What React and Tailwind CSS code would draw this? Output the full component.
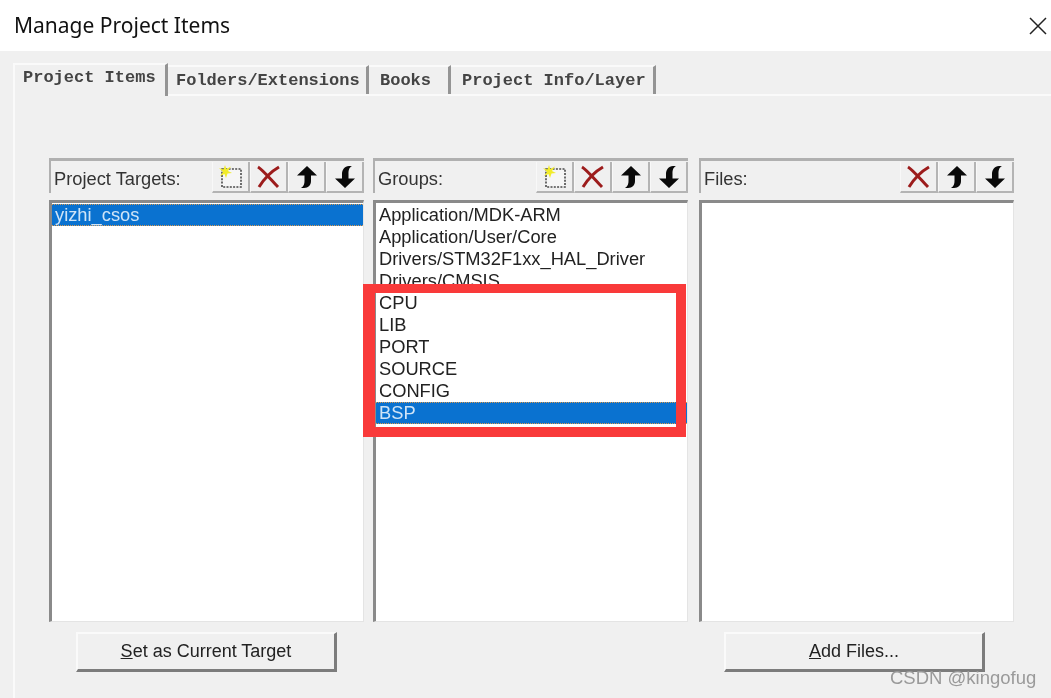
import React from "react";

function NewIcon() {
  return (
    <svg width="28" height="26" viewBox="0 0 28 26">
      <rect x="5" y="5" width="19" height="18" fill="#f6f6f6" stroke="#4a4a4a" strokeWidth="1.600" strokeDasharray="2 1.300" />
      <path d="M8 1 9.300 5 14 2.500 11 7 15 9 10.500 9.500 9 14 7.500 10 3 12 6 8 2 4 6.500 5.500Z" fill="#f2ec2a" />
    </svg>
  );
}

function DeleteIcon() {
  return (
    <svg width="26" height="26" viewBox="0 0 26 26">
      <path d="M2 3c5 3 14 14 20 20M23 3C16 7 8 15 3 23" stroke="#9c1c1c" strokeWidth="3" fill="none" />
    </svg>
  );
}

function UpIcon() {
  return (
    <svg width="26" height="26" viewBox="0 0 26 26">
      <path d="M13 2 23 11.500H17V17C17 21 14.500 24 10 24H7C10 22 10.500 19.500 10.500 17V11.500H3Z" fill="#0a0a0a" />
    </svg>
  );
}

function DownIcon() {
  return (
    <svg width="26" height="26" viewBox="0 0 26 26">
      <path d="M13 24 3 14.500H10V10C10 6 12.500 2 17 2H20C16.500 4 16.500 7 16.500 10V14.500H23Z" fill="#0a0a0a" />
    </svg>
  );
}

function ToolButton({ children }) {
  return (
    <div className="w-[38px] h-[31px] flex items-center justify-center border-r-2 border-b-2 border-[#b4b4b4] border-l border-l-[#f8f8f8] bg-[#f0f0f0]">
      {children}
    </div>
  );
}

function Column({ title, showNew, rows, className }) {
  return (
    <div className={className}>
      <div className="h-[35px] flex justify-between border-t-[3px] border-l-2 border-[#b0b0b0] bg-[#f0f0f0]">
        <span className="pl-[3px] pt-[6px] text-[18.3px] leading-[24px] text-[#333]">{title}</span>
        <div className="flex pt-[1px]">
          {showNew && (
            <ToolButton>
              <NewIcon />
            </ToolButton>
          )}
          <ToolButton>
            <DeleteIcon />
          </ToolButton>
          <ToolButton>
            <UpIcon />
          </ToolButton>
          <ToolButton>
            <DownIcon />
          </ToolButton>
        </div>
      </div>
      <div className="mt-[7px] h-[422px] bg-white border-t-[3px] border-l-[3px] border-[#8a8a8a] border-r border-b border-r-[#e4e4e4] border-b-[#e4e4e4] pt-[1px] text-[18.3px] leading-[22px] text-[#222]">
        {rows.map((row) => (
          <div
            key={row.label}
            className={row.selected ? "h-[22px] pl-[3px] bg-[#0a72d0] text-[#cfe4f7] border-y border-dotted border-[#d99a50] leading-[20px]" : "h-[22px] pl-[3px]"}
          >
            {row.label}
          </div>
        ))}
      </div>
    </div>
  );
}

function WinButton({ className, children }) {
  return (
    <button className={`h-[40px] w-[261px] bg-[#f0f0f0] border-t-2 border-l-2 border-[#fafafa] border-r-[3px] border-b-[3px] border-r-[#7c7c7c] border-b-[#7c7c7c] text-[18px] text-[#222] ${className}`}>
      {children}
    </button>
  );
}

const groups = [
  { label: "Application/MDK-ARM" },
  { label: "Application/User/Core" },
  { label: "Drivers/STM32F1xx_HAL_Driver" },
  { label: "Drivers/CMSIS" },
  { label: "CPU" },
  { label: "LIB" },
  { label: "PORT" },
  { label: "SOURCE" },
  { label: "CONFIG" },
  { label: "BSP", selected: true },
];

const tabs = [
  { label: "Folders/Extensions", box: "w-[201px] pl-[8px]" },
  { label: "Books", box: "w-[82px] pl-[11px]" },
  { label: "Project Info/Layer", box: "w-[205px] pl-[11px]" },
];

export default function App() {
  return (
    <div className="relative w-[1051px] h-[698px] overflow-hidden bg-[#f0f0f0] font-['Liberation_Sans',sans-serif] blur-[0.4px]">
      {/* title bar */}
      <div className="h-[51px] bg-white flex items-center justify-between pl-[14px] pr-[4px]">
        <span className="font-['Noto_Sans',sans-serif] text-[21px] text-[#111]">Manage Project Items</span>
        <svg width="18" height="18" viewBox="0 0 18 18">
          <path d="M1 1 17 17M17 1 1 17" stroke="#222" strokeWidth="1.500" />
        </svg>
      </div>

      {/* tabs */}
      <div className="flex items-end h-[43px] pl-[13px] font-['Liberation_Mono',monospace] font-bold text-[17px] text-[#444]">
        <div className="h-[33px] w-[155px] mb-[-2px] z-10 bg-[#f0f0f0] border-t-2 border-l-2 border-[#fafafa] border-r-[3px] border-r-[#949494] pl-[8px]">
          Project Items
        </div>
        {tabs.map((tab) => (
          <div
            key={tab.label}
            className={`h-[29px] ${tab.box} bg-[#f0f0f0] border-t-2 border-[#fafafa] border-r-[3px] border-r-[#949494] leading-[28px]`}
          >
            {tab.label}
          </div>
        ))}
      </div>

      {/* tab pane */}
      <div className="h-[604px] ml-[13px] border-l-2 border-t-2 border-[#fafafa] pl-[34px] pt-[62px]">
        <div className="flex">
          <Column title="Project Targets:" showNew rows={[{ label: "yizhi_csos", selected: true }]} className="w-[315px]" />
          <Column title="Groups:" showNew rows={groups} className="w-[315px] ml-[9px]" />
          <Column title="Files:" rows={[]} className="w-[315px] ml-[11px]" />
        </div>
        <div className="flex mt-[10px] pl-[27px]">
          <WinButton>
            <u>S</u>et as Current Target
          </WinButton>
          <WinButton className="ml-[387px]">
            <u>A</u>dd Files...
          </WinButton>
        </div>
      </div>

      {/* red annotation drawn over the groups list */}
      <div className="absolute left-[363px] top-[284px] w-[323px] h-[153px] border-[10px] border-l-[12px] border-t-[9px] border-[#f93a3a]" />

      {/* watermark */}
      <div className="absolute left-[890px] top-[667px] text-[18.5px] leading-[22px] text-[#9a9a9a]">CSDN @kingofug</div>
    </div>
  );
}
